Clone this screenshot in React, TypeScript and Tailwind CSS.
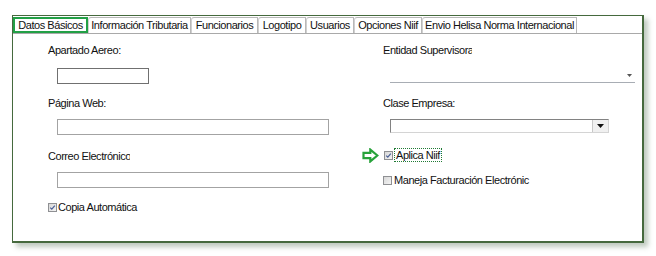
import React from "react";

const tabs = [
  { label: "Datos Básicos", w: "w-[75px]", active: true },
  { label: "Información Tributaria", w: "w-[103px]" },
  { label: "Funcionarios", w: "w-[67px]" },
  { label: "Logotipo", w: "w-[48px]" },
  { label: "Usuarios", w: "w-[48px]" },
  { label: "Opciones Niif", w: "w-[68px]" },
  { label: "Envio Helisa Norma Internacional", w: "w-[155px]" },
];

function Check({ checked }: { checked?: boolean }) {
  return (
    <span className="inline-flex h-[9px] w-[9px] shrink-0 items-center justify-center border border-[#8f9093] bg-gradient-to-br from-[#d8d8d8] to-[#f4f4f4]">
      {checked && (
        <svg width="7" height="7" viewBox="0 0 7 7">
          <path d="M1.2 3.6 L2.8 5.2 L5.8 1.6" fill="none" stroke="#4a5f95" strokeWidth="1.2" />
        </svg>
      )}
    </span>
  );
}

function GreenArrow() {
  return (
    <svg width="17" height="15" viewBox="0 0 17 15" className="shrink-0">
      <path d="M1.5 4.8 H8.3 V1.6 L15.4 7.5 L8.3 13.4 V10.2 H1.5 Z" fill="#fff" stroke="#27a23a" strokeWidth="2.2" strokeLinejoin="miter" />
    </svg>
  );
}

export default function App() {
  return (
    <div
      className="h-[256px] w-[656px] overflow-hidden bg-white pl-[12px] pt-[15px] text-[11px] leading-[13px] tracking-[-0.45px] text-[#111]"
      style={{ fontFamily: '"Liberation Sans", Arial, sans-serif' }}
    >
      <div className="flex h-[228px] w-[632px] flex-col border border-b-2 border-r-2 border-[#45693d] bg-white shadow-[4px_4px_5px_rgba(70,100,70,0.35)]">
        {/* Tabs */}
        <div className="flex h-[18px] shrink-0 items-end border-b border-[#a9a9a9]">
          {tabs.map((t) =>
            t.active ? (
              <div
                key={t.label}
                className={`${t.w} flex h-[16px] items-center justify-center border-2 border-[#22a046]`}
              >
                {t.label}
              </div>
            ) : (
              <div
                key={t.label}
                className={`${t.w} flex h-[16px] items-center justify-center rounded-tl-[3px] border-x border-t border-[#b8b8b8] border-l-[#d0d0d0]`}
              >
                {t.label}
              </div>
            )
          )}
        </div>

        {/* Content */}
        <div className="flex flex-1">
          {/* Left column */}
          <div className="flex w-[335px] flex-col pl-[35px]">
            <div className="mt-[10px]">Apartado Aereo:</div>
            <div className="ml-[9px] mt-[11px] h-[16px] w-[92px] border border-[#707070] bg-white" />
            <div className="mt-[13px]">Página Web:</div>
            <div className="ml-[9px] mt-[9px] h-[16px] w-[272px] border border-[#a3a3a3] bg-white" />
            <div className="mt-[15px] w-[82px] overflow-hidden whitespace-nowrap">Correo Electrónico</div>
            <div className="ml-[9px] mt-[9px] h-[16px] w-[272px] border border-[#a3a3a3] bg-white" />
            <div className="mt-[13px] flex items-center gap-[1px]">
              <Check checked />
              <span>Copia Automática</span>
            </div>
          </div>

          {/* Right column */}
          <div className="flex flex-1 flex-col pl-[35px]">
            <div className="mt-[10px] w-[89px] overflow-hidden whitespace-nowrap">Entidad Supervisora</div>
            <div className="ml-[7px] mt-[17px] flex h-[9px] w-[245px] items-start justify-end border-b border-[#a8adb4] pr-[3px]">
              <svg width="5" height="3" viewBox="0 0 5 3">
                <path d="M0 0 H5 L2.5 3 Z" fill="#555" />
              </svg>
            </div>
            <div className="mt-[14px]">Clase Empresa:</div>
            <div className="ml-[7px] mt-[9px] flex h-[14px] w-[219px] border border-[#828282] border-b-[#d4d4d4] border-r-[#d4d4d4] bg-white">
              <div className="flex-1" />
              <div className="flex w-[16px] items-center justify-center border-l border-[#c8c8c8] bg-[#f0f0f0]">
                <svg width="7" height="4" viewBox="0 0 7 4">
                  <path d="M0 0 H7 L3.5 4 Z" fill="#111" />
                </svg>
              </div>
            </div>
            <div className="-ml-[21px] mt-[15px] flex h-[14px] items-center">
              <GreenArrow />
              <span className="ml-[5px] flex">
                <Check checked />
              </span>
              <span className="ml-[1px] border border-dotted border-[#1f7a34] px-[1px] leading-[12px]">Aplica Niif</span>
            </div>
            <div className="mt-[12px] flex items-center gap-[2px]">
              <Check />
              <span>Maneja Facturación Electrónic</span>
            </div>
          </div>
        </div>
      </div>
    </div>
  );
}
